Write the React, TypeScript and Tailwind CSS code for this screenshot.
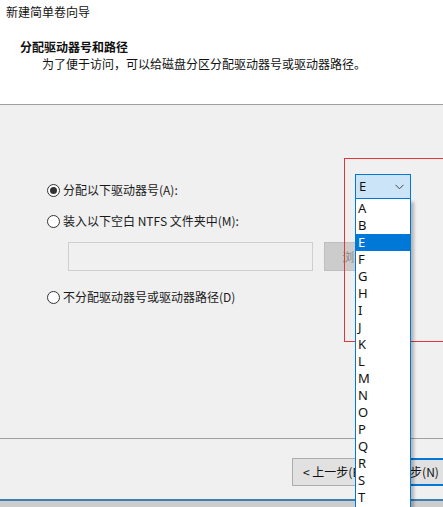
const letters = ['A', 'B', 'E', 'F', 'G', 'H', 'I', 'J', 'K', 'L', 'M', 'N', 'O', 'P', 'Q', 'R', 'S', 'T', 'U'];

function Radio({ checked, label }: { checked?: boolean; label: string }) {
    return (
        <div className="flex items-center h-4 text-[12px] text-[#1a1a1a]">
            <span className="w-[13px] h-[13px] rounded-full border border-[#333] bg-white flex items-center justify-center">
                {checked && <span className="w-[7px] h-[7px] rounded-full bg-[#333]"></span>}
            </span>
            <span className="ml-[3px] leading-4">{label}</span>
        </div>
    );
}

export default function App() {
    return (
        <div
            className="relative w-[443px] h-[507px] overflow-hidden bg-[#f0f0f0]"
            style={{ fontFamily: '"Microsoft YaHei UI", "Noto Sans CJK SC", "Noto Sans", sans-serif' }}
        >
            {/* Wizard header */}
            <div className="h-[105px] bg-white border-b border-[#a0a0a0] text-[12px] text-[#111]">
                <div className="pl-[6px] pt-[4px] leading-4">新建简单卷向导</div>
                <div className="pl-[20px] pt-[19px] font-bold leading-4">分配驱动器号和路径</div>
                <div className="pl-[42px] pt-[1px] leading-4">为了便于访问，可以给磁盘分区分配驱动器号或驱动器路径。</div>
            </div>

            {/* Options */}
            <div className="h-[333px] pt-[77px] pl-[47px]">
                <Radio checked label="分配以下驱动器号(A):" />
                <div className="mt-[15px]">
                    <Radio label="装入以下空白 NTFS 文件夹中(M):" />
                </div>
                <div className="mt-[13px] ml-[21px] flex gap-[11px]">
                    <div className="w-[245px] h-[29px] shrink-0 border border-[#cfcfcf] bg-[#f0f0f0]"></div>
                    <div className="w-[86px] h-[29px] shrink-0 bg-[#cccccc] border border-[#bfbfbf] text-[#8a8a8a] text-[12px] flex items-center justify-center whitespace-nowrap">
                        浏览(R)...
                    </div>
                </div>
                <div className="mt-[18px]">
                    <Radio label="不分配驱动器号或驱动器路径(D)" />
                </div>
            </div>

            {/* Buttons */}
            <div className="h-[61px] border-t border-[#a0a0a0] pt-[19px] flex gap-[8px] pl-[292px]">
                <div className="w-[75px] h-[28px] shrink-0 whitespace-nowrap bg-[#e1e1e1] border border-[#adadad] text-[12px] text-[#111] flex items-center pl-[10px]">
                    &lt; 上一步(B)
                </div>
                <div className="w-[75px] h-[28px] shrink-0 whitespace-nowrap bg-[#e1e1e1] border-2 border-[#0078d7] text-[12px] text-[#111] flex items-center justify-center">
                    下一步(N)
                </div>
            </div>
            <div className="h-[2px] bg-[#3c7fb1]"></div>
            <div className="h-[6px] bg-[#cdcdcd]"></div>

            {/* Highlight frame */}
            <div className="absolute left-[344px] top-[158px] w-[101px] h-[184px] border border-[#e0363c]"></div>

            {/* Drive letter combo box with its open list */}
            <div className="absolute left-[355px] top-[174px] w-[56px]">
                <div className="h-[25px] bg-[#cce4f7] border border-[#0078d7] flex items-center justify-between pl-[3px] pr-[6px] text-[13px] text-[#111]"
                    style={{ fontFamily: '"Segoe UI", "Noto Sans", sans-serif' }}>
                    <span>E</span>
                    <svg width="9" height="6" viewBox="0 0 9 6" fill="none">
                        <path d="M0.5 0.8 L4.5 4.8 L8.5 0.8" stroke="#444" strokeWidth="1" />
                    </svg>
                </div>
                <div className="bg-white border border-t-0 border-[#0078d7] shadow-[3px_3px_3px_rgba(0,0,0,0.25)] pt-px"
                    style={{ fontFamily: '"Segoe UI", "Noto Sans", sans-serif' }}>
                    {letters.map((l) => (
                        <div
                            key={l}
                            className={`h-[17px] leading-[17px] pl-[2px] text-[13px] ${l === 'E' ? 'bg-[#0078d7] text-white' : 'text-[#111]'}`}
                        >
                            {l}
                        </div>
                    ))}
                </div>
            </div>
        </div>
    );
}
